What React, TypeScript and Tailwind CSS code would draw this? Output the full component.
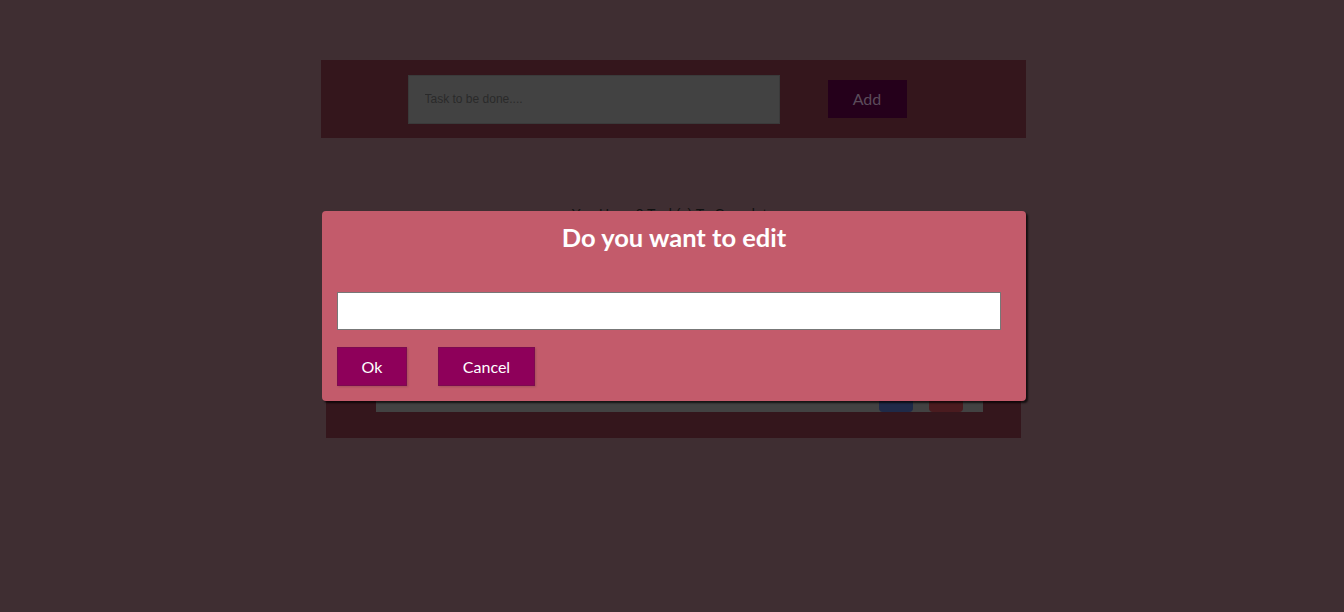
export default function App() {
  return (
    <div className="relative min-h-[612px] w-full bg-[#3f2e32] font-['Liberation_Sans',sans-serif]">
      <div className="pt-[60px] pl-[2px]">
        <div className="mx-auto flex h-[78px] w-[705px] items-center bg-[#34161c] pl-[87px]">
          <input
            placeholder="Task to be done...."
            className="h-[49px] w-[372px] border border-[#3a3a3a] bg-[#424242] px-4 text-[12px] text-[#2a2a2a] outline-none placeholder:text-[#2a2a2a]"
          />
          <button className="ml-[48px] h-[38px] w-[79px] bg-[#25001b] font-['Lato',sans-serif] text-[16px] text-[#5b4b5a]">
            Add
          </button>
        </div>

        <p className="mt-[68px] text-center text-[14px] leading-4 text-[#111]">You Have 0 Task(s) To Complete</p>

        <div className="mx-auto mt-[18px] w-[695px] bg-[#34161c] pt-[132px] pr-[38px] pb-[26px] pl-[50px]">
          <div className="flex h-[40px] items-center justify-end gap-4 bg-[#424242] pr-[20px]">
            <span className="mr-auto pl-5 text-[13px] text-[#222]">Sample task</span>
            <div className="h-[34px] w-[34px] self-end rounded-[4px] bg-[#1f2a48]" />
            <div className="h-[34px] w-[34px] self-end rounded-[4px] bg-[#4a1b1f]" />
          </div>
        </div>
      </div>

      <div className="absolute inset-x-0 top-[211px] flex justify-center pl-[4px]">
        <div className="h-[190px] w-[704px] rounded-[4px] bg-[#c35b6b] pt-[11px] pr-[25px] pb-[15px] pl-[15px] font-['Lato',sans-serif] shadow-[2px_2px_2px_rgba(0,0,0,0.7)]">
          <h2 className="pl-[10px] text-center text-[25.5px] leading-[31px] font-bold text-white">Do you want to edit</h2>
          <input className="mt-[39px] block h-[38px] w-full border border-[#777] bg-white px-2 text-[16px] outline-none" />
          <div className="mt-[17px] flex gap-[31px]">
            <button className="h-[39px] w-[70px] border border-[#7d0a50] bg-[#8e005a] text-[16px] text-white shadow-[1px_1px_2px_rgba(0,0,0,0.15)]">
              Ok
            </button>
            <button className="h-[39px] w-[97px] border border-[#7d0a50] bg-[#8e005a] text-[16px] text-white shadow-[1px_1px_2px_rgba(0,0,0,0.15)]">
              Cancel
            </button>
          </div>
        </div>
      </div>
    </div>
  )
}
